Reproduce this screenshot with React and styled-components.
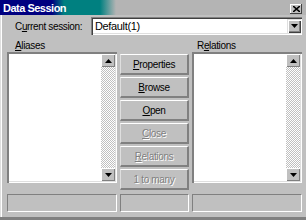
import React from "react";
import styled, { createGlobalStyle } from "styled-components";

const GlobalStyle = createGlobalStyle`
  html, body {
    margin: 0;
    padding: 0;
    background: #c0c0c0;
  }
  body {
    font-family: "Liberation Sans", Arial, sans-serif;
    font-size: 10px;
    letter-spacing: -0.35px;
    color: #000;
  }
`;

const Window = styled.div`
  width: 306px;
  height: 220px;
  box-sizing: border-box;
  background: #c0c0c0;
  border-bottom: 3px solid #808080;
  box-shadow: inset 1px 0 #dfdfdf, inset 2px 0 #ffffff;
  display: flex;
  flex-direction: column;
  overflow: hidden;
`;

const TitleBar = styled.div`
  height: 15px;
  display: flex;
  align-items: center;
  justify-content: space-between;
  padding: 0 4px 0 3px;
  background: linear-gradient(
    to right,
    #000080 0,
    #000080 52px,
    #008080 64px,
    #008080 100px,
    #b4b4b4 116px,
    #b4b4b4 100%
  );
`;

const Title = styled.span`
  font-weight: bold;
  font-size: 11px;
  letter-spacing: -0.5px;
  color: #ffffff;
`;

const CloseBox = styled.button`
  width: 12px;
  height: 10px;
  margin-top: 3px;
  padding: 0;
  border: none;
  background: #c0c0c0;
  box-shadow: inset -1px -1px #404040, inset 1px 1px #ffffff;
  display: flex;
  align-items: center;
  justify-content: center;
`;

const Body = styled.div`
  flex: 1;
  display: flex;
  flex-direction: column;
  padding: 2px 4px 0 7px;
`;

const SessionRow = styled.div`
  height: 18px;
  display: flex;
  align-items: center;
`;

const Label = styled.span`
  box-sizing: border-box;
  flex-shrink: 0;
  padding-left: ${(p) => p.$indent || 0}px;
  width: ${(p) => (p.$width ? `${p.$width}px` : "auto")};
  white-space: nowrap;
  u {
    text-decoration: underline;
    text-underline-offset: 1px;
  }
`;

const Combo = styled.div`
  flex: 1;
  height: 18px;
  box-sizing: border-box;
  background: #ffffff;
  box-shadow: inset 1px 1px #808080, inset 2px 2px #404040, inset -1px -1px #ffffff,
    inset -2px -2px #dfdfdf;
  display: flex;
  align-items: center;
  justify-content: space-between;
  padding: 0 1px 0 4px;
  font-size: 11px;
`;

const Panes = styled.div`
  display: grid;
  grid-template-columns: 110px 69px 110px;
  grid-template-rows: 17px auto;
  column-gap: 3px;
`;

const PaneLabel = styled(Label)`
  grid-column: ${(p) => p.$col};
  align-self: center;
  padding-top: 3px;
`;

const ListBox = styled.div`
  grid-row: 2;
  grid-column: ${(p) => p.$col};
  height: 131px;
  box-sizing: border-box;
  padding: 2px;
  background: #ffffff;
  box-shadow: inset 1px 1px #808080, inset 2px 2px #808080, inset -1px -1px #ffffff,
    inset -2px -2px #dfdfdf;
  display: flex;
  justify-content: flex-end;
`;

const ScrollBar = styled.div`
  width: 14px;
  display: flex;
  flex-direction: column;
  justify-content: space-between;
  background: repeating-conic-gradient(#c0c0c0 0 25%, #ffffff 0 50%) 0 0 / 2px 2px;
`;

const ArrowButton = styled.div`
  width: 14px;
  height: 13px;
  box-sizing: border-box;
  background: #c0c0c0;
  box-shadow: inset 1px 1px #ffffff, inset -1px -1px #808080;
  display: flex;
  align-items: center;
  justify-content: center;
`;

const DropButton = styled(ArrowButton)`
  height: 14px;
  box-shadow: inset 1px 1px #dfdfdf, inset 2px 2px #ffffff, inset -1px -1px #404040,
    inset -2px -2px #808080;
`;

const ButtonStack = styled.div`
  grid-row: 2;
  grid-column: 2;
  padding-top: 2px;
  display: flex;
  flex-direction: column;
  gap: 2px;
`;

const PushButton = styled.button`
  height: 21px;
  padding: 0;
  border: none;
  border-top: 1px solid #ffffff;
  border-left: 1px solid #dfdfdf;
  border-bottom: 2px solid #808080;
  border-right: 2px solid #808080;
  background: #c0c0c0;
  font: inherit;
  letter-spacing: inherit;
  color: ${(p) => (p.disabled ? "#808080" : "#000000")};
  text-shadow: ${(p) => (p.disabled ? "1px 1px #ffffff" : "none")};
  u {
    text-underline-offset: 1px;
  }
`;

const StatusBar = styled.div`
  margin-top: 4px;
  display: grid;
  grid-template-columns: 110px 69px 110px;
  column-gap: 3px;
`;

const StatusPanel = styled.div`
  height: 18px;
  box-sizing: border-box;
  border-top: 1px solid #808080;
  border-left: 1px solid #808080;
  border-bottom: 1px solid #ffffff;
  border-right: 1px solid #ffffff;
`;

const Triangle = ({ down }) => (
  <svg width="7" height="4" viewBox="0 0 7 4">
    <path d={down ? "M0 0h7L3.5 4z" : "M0 4h7L3.5 0z"} fill="#000" />
  </svg>
);

const List = ({ col }) => (
  <ListBox $col={col}>
    <ScrollBar>
      <ArrowButton>
        <Triangle />
      </ArrowButton>
      <ArrowButton>
        <Triangle down />
      </ArrowButton>
    </ScrollBar>
  </ListBox>
);

const buttons = [
  { key: "P", rest: "roperties" },
  { key: "B", rest: "rowse" },
  { key: "O", rest: "pen" },
  { key: "C", rest: "lose", disabled: true },
  { key: "R", rest: "elations", disabled: true },
  { key: "", rest: "1 to many", disabled: true },
];

const App = () => {
  return (
    <>
      <GlobalStyle />
      <Window>
        <TitleBar>
          <Title>Data Session</Title>
          <CloseBox>
            <svg width="7" height="6" viewBox="0 0 7 6">
              <path d="M0 0l7 6M7 0L0 6" stroke="#000" strokeWidth="1.6" />
            </svg>
          </CloseBox>
        </TitleBar>
        <Body>
          <SessionRow>
            <Label $indent={8} $width={84}>
              C<u>u</u>rrent session:
            </Label>
            <Combo>
              <span>Default(1)</span>
              <DropButton>
                <Triangle down />
              </DropButton>
            </Combo>
          </SessionRow>
          <Panes>
            <PaneLabel $col={1} $indent={8}>
              <u>A</u>liases
            </PaneLabel>
            <PaneLabel $col={3} $indent={5}>
              R<u>e</u>lations
            </PaneLabel>
            <List col={1} />
            <ButtonStack>
              {buttons.map((b) => (
                <PushButton key={b.rest} disabled={b.disabled}>
                  {b.key && <u>{b.key}</u>}
                  {b.rest}
                </PushButton>
              ))}
            </ButtonStack>
            <List col={3} />
          </Panes>
          <StatusBar>
            <StatusPanel />
            <StatusPanel />
            <StatusPanel />
          </StatusBar>
        </Body>
      </Window>
    </>
  );
};

export default App;
